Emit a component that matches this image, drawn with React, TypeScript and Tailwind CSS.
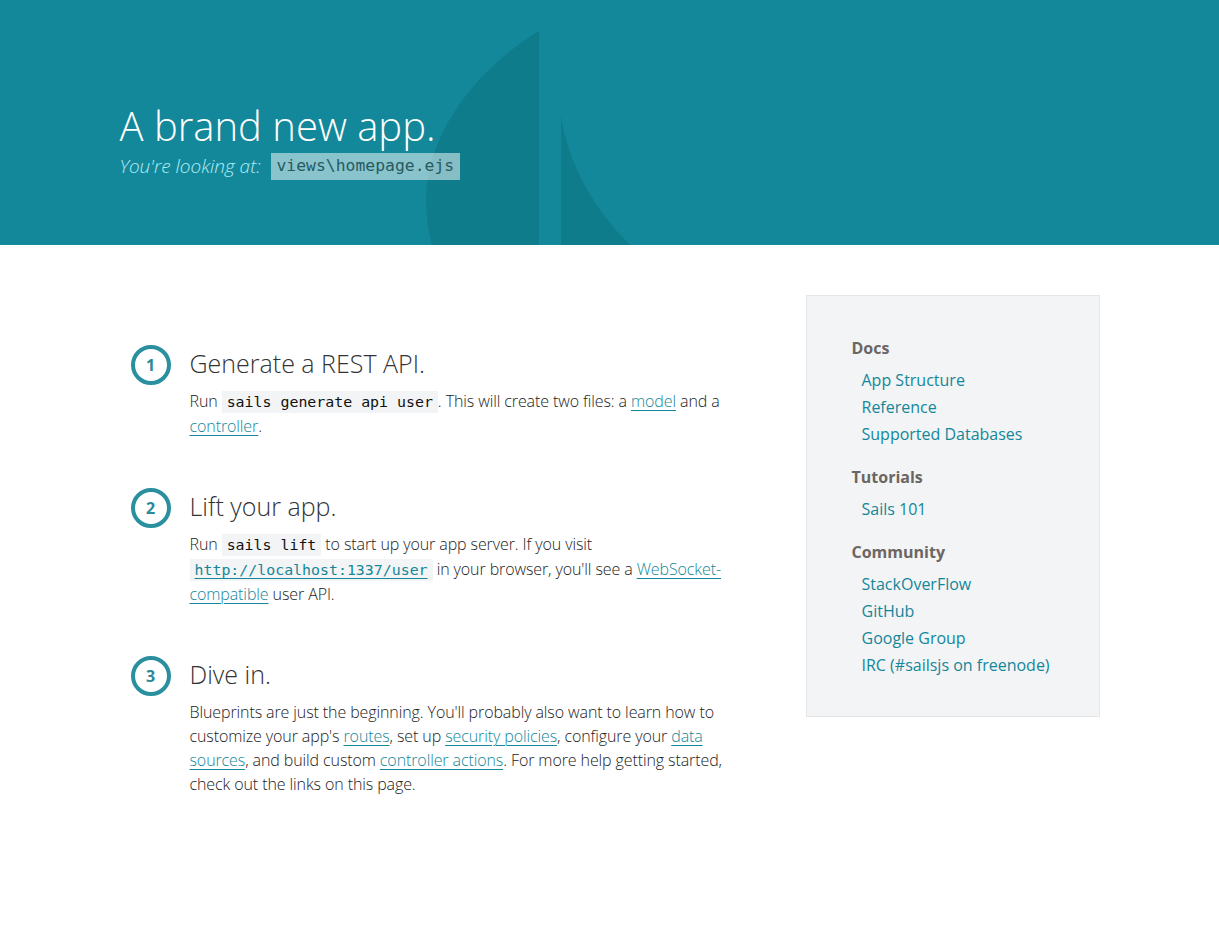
import React from "react";

const body = "font-['Open_Sans',sans-serif]";
const mono = "font-['DejaVu_Sans_Mono',monospace]";

function Code({ children }: { children: React.ReactNode }) {
  return (
    <code className={`${mono} bg-[#f3f4f5] px-[5px] py-[2px] text-[14.9px] font-normal text-[#111] tracking-normal`}>
      {children}
    </code>
  );
}

function A({ children }: { children: React.ReactNode }) {
  return (
    <a href="#" className="text-[#14879a] underline underline-offset-[3px] decoration-1">
      {children}
    </a>
  );
}

function Step({ n, title, children }: { n: number; title: string; children: React.ReactNode }) {
  return (
    <div className="flex">
      <div className="w-10 h-10 mt-[-3px] shrink-0 rounded-full border-4 border-[#2a909f] flex items-center justify-center text-[16px] font-bold text-[#2a8a99]">
        {n}
      </div>
      <div className="ml-[19px] w-[545px]">
        <h2 className="text-[25px] leading-[30px] font-light text-[#333]">{title}</h2>
        <p className="mt-[11px] text-[16px] leading-[24px] font-light text-[#222] tracking-[-0.1px]">{children}</p>
      </div>
    </div>
  );
}

function Section({ title, links, first }: { title: string; links: string[]; first?: boolean }) {
  return (
    <div className={first ? "" : "mt-[17px]"}>
      <h3 className="text-[16px] leading-[24px] font-bold text-[#6b6663]">{title}</h3>
      <ul className="mt-[7px] ml-[10px]">
        {links.map((l) => (
          <li key={l} className="text-[16px] leading-[27px] text-[#14879a]">
            <a href="#">{l}</a>
          </li>
        ))}
      </ul>
    </div>
  );
}

export default function App() {
  return (
    <div className={`${body} bg-white min-h-[940px]`}>
      <div className="relative h-[245px] bg-[#13889a] overflow-hidden">
        <svg className="absolute left-0 top-0" width="1219" height="245" viewBox="0 0 1219 245">
          <path d="M539 31 C 475 70 426 135 426 200 C 426 216 428 231 432 245 L 539 245 Z" fill="#0f7c8b" />
          <path d="M561 115 C 568 165 595 210 630 245 L 561 245 Z" fill="#0f7c8b" />
        </svg>
        <div className="relative w-[980px] mx-auto pt-[104px]">
          <h1 className="text-[40px] leading-[44px] font-light text-white">A brand new app.</h1>
          <div className="mt-[5px] flex items-center h-[27px]">
            <span className="italic font-light text-[19px] text-[#b3ecf3]">You're looking at:</span>
            <code className={`${mono} ml-[10px] h-[27px] flex items-center bg-[rgba(255,255,255,0.5)] px-[6px] text-[16.4px] text-[#275a62]`}>
              views\homepage.ejs
            </code>
          </div>
        </div>
      </div>

      <div className="w-[980px] mx-auto flex pt-[50px]">
        <div className="pt-[53px] pl-[11px] flex flex-col gap-[53px]">
          <Step n={1} title="Generate a REST API.">
            Run <Code>sails generate api user</Code>. This will create two files: a <A>model</A> and a{" "}
            <A>controller</A>.
          </Step>
          <Step n={2} title="Lift your app.">
            Run <Code>sails lift</Code> to start up your app server. If you visit{" "}
            <Code>
              <a href="#" className="text-[#14879a] underline underline-offset-[3px]">
                http://localhost:1337/user
              </a>
            </Code>{" "}
            in your browser, you'll see a <A>WebSocket-compatible</A> user API.
          </Step>
          <Step n={3} title="Dive in.">
            Blueprints are just the beginning. You'll probably also want to learn how to customize your app's{" "}
            <A>routes</A>, set up <A>security policies</A>, configure your <A>data sources</A>, and build
            custom <A>controller actions</A>. For more help getting started, check out the links on this page.
          </Step>
        </div>

        <div className="ml-auto w-[294px] h-[422px] bg-[#f3f4f5] border border-[#e4e6e8] pt-[40px] pl-[45px]">
          <Section first title="Docs" links={["App Structure", "Reference", "Supported Databases"]} />
          <Section title="Tutorials" links={["Sails 101"]} />
          <Section title="Community" links={["StackOverFlow", "GitHub", "Google Group", "IRC (#sailsjs on freenode)"]} />
        </div>
      </div>
    </div>
  );
}
